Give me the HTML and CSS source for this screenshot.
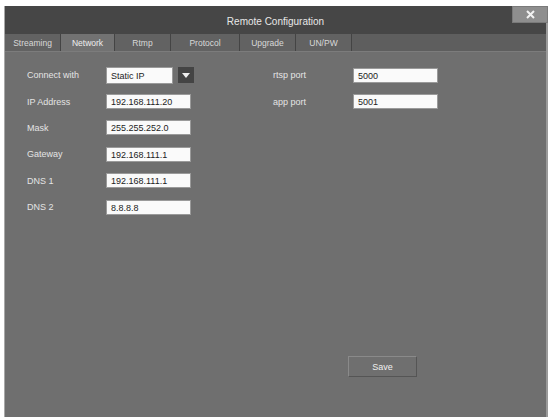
FILE: index.html
```html
<!DOCTYPE html>
<html>
<head>
<meta charset="utf-8">
<link rel="stylesheet" href="styles.css">
</head>
<body>
<div class="window">
  <div class="titlebar">
    <span class="title">Remote Configuration</span>
    <div class="close">
      <svg width="9" height="9" viewBox="0 0 9 9"><path d="M1 1L8 8M8 1L1 8" stroke="#f2f2f2" stroke-width="2"/></svg>
    </div>
  </div>
  <div class="tabs">
    <div class="tab w57">Streaming</div>
    <div class="tab active w53">Network</div>
    <div class="tab w56">Rtmp</div>
    <div class="tab w69">Protocol</div>
    <div class="tab w56">Upgrade</div>
    <div class="tab w56">UN/PW</div>
  </div>
  <div class="panel">
    <div class="columns">
      <div class="col left">
        <div class="row"><span class="label">Connect with</span><div class="select"><span class="input short">Static IP</span><span class="drop"><svg width="8" height="5" viewBox="0 0 8 5"><path d="M0 0H8L4 5Z" fill="#eee"/></svg></span></div></div>
        <div class="row"><span class="label">IP Address</span><span class="input">192.168.111.20</span></div>
        <div class="row"><span class="label">Mask</span><span class="input">255.255.252.0</span></div>
        <div class="row"><span class="label">Gateway</span><span class="input">192.168.111.1</span></div>
        <div class="row"><span class="label">DNS 1</span><span class="input">192.168.111.1</span></div>
        <div class="row"><span class="label">DNS 2</span><span class="input">8.8.8.8</span></div>
      </div>
      <div class="col right">
        <div class="row"><span class="label">rtsp port</span><span class="input">5000</span></div>
        <div class="row"><span class="label">app port</span><span class="input">5001</span></div>
      </div>
    </div>
    <div class="footer"><button class="save">Save</button></div>
  </div>
</div>
</body>
</html>
```
FILE: styles.css
```css
html, body { margin: 0; padding: 0; background: #fff; }
body { font-family: "Liberation Sans", Arial, sans-serif; font-size: 9px; color: #e4e4e4; }
.window {
  margin: 6px 0 0 4px;
  width: 544px;
  height: 411px;
  box-sizing: border-box;
  border-left: 1px solid #a8a8a8;
  border-right: 2px solid #9a9a9a;
  background: #6f6f6f;
  display: flex;
  flex-direction: column;
}
.titlebar {
  height: 28px;
  background: #464646;
  position: relative;
  display: flex;
  align-items: center;
  justify-content: center;
  flex: none;
}
.title { font-size: 10px; color: #e8e8e8; padding-top: 2px; }
.close {
  position: absolute;
  right: -2px;
  top: 0;
  width: 36px;
  height: 17px;
  background: #8e8e8e;
  border: 1px solid #7a7a7a;
  box-sizing: border-box;
  display: flex;
  align-items: center;
  justify-content: center;
}
.tabs {
  height: 18px;
  background: #5e5e5e;
  display: flex;
  border-bottom: 1px solid #7c7c7c;
  box-sizing: border-box;
  flex: none;
}
.tab {
  box-sizing: border-box;
  border-right: 1px solid #444;
  display: flex;
  align-items: center;
  justify-content: center;
  color: #d8d8d8;
  font-size: 8.5px;
  background: #626262;
}
.tab.active { background: #727272; color: #eee; }
.w57 { width: 56px; }
.w53 { width: 54px; }
.w56 { width: 56px; }
.w69 { width: 69px; }
.panel {
  flex: 1;
  display: flex;
  flex-direction: column;
  padding-top: 10px;
}
.columns { display: flex; }
.col { display: flex; flex-direction: column; }
.left { padding-left: 22px; width: 246px; box-sizing: border-box; }
.right { padding-left: 22px; }
.row { height: 26.4px; display: flex; align-items: center; }
.left .label { width: 79px; }
.right .label { width: 80px; }
.input {
  display: inline-block;
  box-sizing: border-box;
  width: 85px;
  height: 15px;
  line-height: 14px;
  background: #fafafa;
  color: #222;
  border: 1px solid #9a9a9a;
  padding-left: 4px;
  font-size: 9px;
}
.select { display: flex; align-items: center; }
.input.short { width: 67px; height: 17px; line-height: 16px; }
.drop {
  margin-left: 5px;
  width: 16px;
  height: 16px;
  background: #444;
  display: flex;
  align-items: center;
  justify-content: center;
}
.footer {
  margin-top: auto;
  padding: 0 0 40px 343px;
  display: flex;
}
.save {
  width: 69px;
  height: 21px;
  background: #6f6f6f;
  border: 1px solid #8a8a8a;
  border-bottom-color: #555;
  border-right-color: #555;
  color: #f0f0f0;
  font-family: "Liberation Sans", Arial, sans-serif;
  font-size: 9px;
  padding: 0;
}
```
